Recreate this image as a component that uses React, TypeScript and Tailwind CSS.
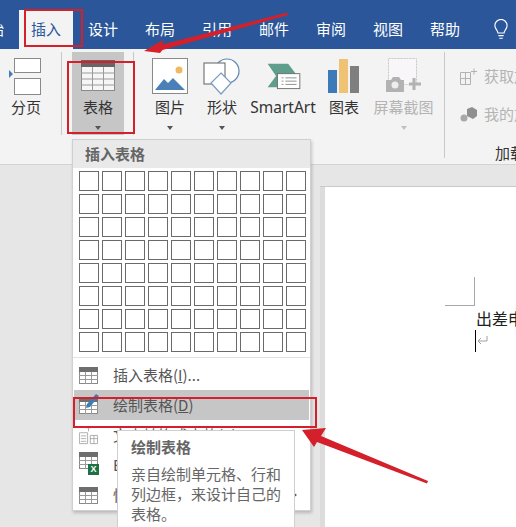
const font = { fontFamily: '"Noto Sans CJK SC", "Noto Sans", sans-serif' };

const tabs = ['设计', '布局', '引用', '邮件', '审阅', '视图', '帮助'];

function TableIcon({ className = '' }: { className?: string }) {
  return (
    <svg width="19" height="17" viewBox="0 0 19 17" className={className}>
      <rect x="0.5" y="0.5" width="18" height="16" fill="#fff" stroke="#8a8a8a" />
      <rect x="0" y="0" width="19" height="5" fill="#6e6e6e" />
      <path d="M0 8.500h19M0 12.500h19M6.500 5v12M12.500 5v12" stroke="#9a9a9a" />
    </svg>
  );
}

function BigTableIcon() {
  return (
    <svg width="34" height="31" viewBox="0 0 34 31" className="mb-[4px]">
      <rect x="0.5" y="0.5" width="33" height="30" fill="#f6f6f6" stroke="#8a8a8a" />
      <rect x="0" y="0" width="34" height="7" fill="#6b6464" />
      <path d="M0 13h34M0 19h34M0 25h34M11.500 7v24M22.500 7v24" stroke="#9a9a9a" />
    </svg>
  );
}

function RibbonItem({ width, label, icon, arrow = true, faded = false, active = false }: any) {
  return (
    <div className={`flex flex-col items-center shrink-0 h-[83px] ${active ? 'bg-[#c6c6c6]' : ''}`} style={{ width }}>
      <div className="h-[43px] flex items-end justify-center">{icon}</div>
      <div className={`mt-[1px] text-[15px] leading-[22px] whitespace-nowrap ${faded ? 'text-[#b4b4b4]' : 'text-[#333]'}`}>{label}</div>
      {arrow && <div className={`mt-[8px] w-0 h-0 border-x-[3.5px] border-x-transparent border-t-[4px] ${faded ? 'border-t-[#c0c0c0]' : 'border-t-[#555]'}`} />}
    </div>
  );
}

function MenuItem({ icon, label, active = false, more = false }: any) {
  return (
    <div className={`flex items-center h-[30px] mx-[1px] pl-[5px] ${active ? 'bg-[#c6c6c6]' : ''}`}>
      <div className="w-[34px] shrink-0 flex justify-start">{icon}</div>
      <div className="text-[15px] text-[#555] whitespace-nowrap">{label}</div>
      {more && <div className="ml-auto mr-[12px] w-0 h-0 border-y-[3.5px] border-y-transparent border-l-[4px] border-l-[#555]" />}
    </div>
  );
}

export default function App() {
  return (
    <div className="relative w-[516px] h-[527px] overflow-hidden bg-[#e6e6e6]" style={font}>
      {/* tabs */}
      <div className="h-[49px] bg-[#2b579a] flex items-end text-white text-[15px]">
        <div className="w-[19px] h-[39px] overflow-hidden relative shrink-0">
          <span className="absolute right-[15px] top-[8px] whitespace-nowrap">开始</span>
        </div>
        <div className="w-[54px] h-[39px] bg-[#f3f3f3] text-[#2b579a] flex items-center justify-center shrink-0 pb-[1px]">插入</div>
        <div className="flex gap-[27px] ml-[15px] h-[39px] items-center pb-[1px]">
          {tabs.map((t) => (
            <span key={t} className="whitespace-nowrap">{t}</span>
          ))}
        </div>
        <svg width="16" height="21" viewBox="0 0 18 24" className="ml-[33px] mb-[9px] shrink-0" fill="none" stroke="#fff" strokeWidth="1.3">
          <path d="M5.500 16c0-3-3.500-4.500-3.500-8.500a7 7 0 0 1 14 0c0 4-3.500 5.500-3.500 8.500z" />
          <path d="M6 19h6M7 22h4" />
        </svg>
      </div>

      {/* ribbon */}
      <div className="h-[116px] bg-[#f3f3f3] border-b border-[#d4d4d4] flex pt-[3px]">
        <div className="w-[62px] h-[83px] border-r border-[#c8c8c8] shrink-0">
          <RibbonItem
            width={52}
            label="分页"
            arrow={false}
            icon={
              <svg width="34" height="38" viewBox="0 0 34 38">
                <rect x="5.500" y="1.500" width="26" height="14" fill="#fff" stroke="#8a8a8a" />
                <rect x="5.500" y="21.500" width="26" height="16" fill="#fff" stroke="#8a8a8a" />
                <path d="M0 13l4 4-4 4z" fill="#4a7ab5" />
              </svg>
            }
          />
        </div>
        <div className="ml-[10px]">
          <RibbonItem width={52} active label="表格" icon={<BigTableIcon />} />
        </div>
        <div className="ml-[9px] w-px h-[83px] bg-[#c8c8c8] shrink-0" />
        <RibbonItem
          width={72}
          label="图片"
          icon={
            <svg width="36" height="36" viewBox="0 0 36 36" className="mb-[1px]">
              <rect x="0.500" y="0.500" width="35" height="35" fill="#fff" stroke="#8a8a8a" />
              <circle cx="27" cy="12" r="3.500" fill="#f0b860" />
              <path d="M3 32l9-11 4 4 5-5 12 12z" fill="#4a7fb8" />
            </svg>
          }
        />
        <RibbonItem
          width={32}
          label="形状"
          icon={
            <svg width="38" height="37" viewBox="0 0 38 37" fill="none" stroke="#5f87b3" strokeWidth="1.2">
              <circle cx="24" cy="13" r="12" fill="#fff" />
              <rect x="1" y="5" width="21" height="21" fill="#fff" stroke="#7a7a7a" />
              <path d="M18 15l10 10-10 11L8 25z" fill="#fff" stroke="#7a9cc0" />
            </svg>
          }
        />
        <RibbonItem
          width={90}
          arrow={false}
          label={<span className="text-[15.500px]" style={{ fontFamily: '"Noto Sans", sans-serif' }}>SmartArt</span>}
          icon={
            <svg width="37" height="28" viewBox="0 0 38 30" className="mb-[5px]">
              <path d="M2 2h22l10 13-8 12H2l9-12z" fill="#5f9d8c" />
              <rect x="12.500" y="12.500" width="24" height="16" fill="#fff" stroke="#6f6f6f" />
              <path d="M17 17h2M21 17h12M17 20.500h2M21 20.500h12M17 24h2M21 24h12" stroke="#8a8a8a" />
            </svg>
          }
        />
        <RibbonItem
          width={32}
          arrow={false}
          label="图表"
          icon={
            <svg width="32" height="34" viewBox="0 0 32 34" className="mb-[2px]">
              <rect x="0" y="11" width="9" height="23" fill="#3f7ab8" />
              <rect x="11" y="0" width="9" height="34" fill="#efc274" />
              <rect x="22" y="7" width="9" height="27" fill="#7f7f7f" />
            </svg>
          }
        />
        <RibbonItem
          width={87}
          faded
          label="屏幕截图"
          icon={
            <svg width="36" height="34" viewBox="0 0 36 34" className="mb-[3px]">
              <rect x="2.500" y="0.500" width="28" height="26" fill="#f8f6f8" stroke="#c8c8c8" strokeDasharray="2 1" />
              <path d="M0 22h5l2-3h6l2 3h3v12H0z" fill="#b2b2b2" />
              <circle cx="9" cy="27" r="3.500" fill="#eee" />
              <path d="M28 20v12M23 26h12" stroke="#b2b2b2" strokeWidth="3" />
            </svg>
          }
        />
        <div className="ml-[-3px] w-px h-[106px] bg-[#c8c8c8] shrink-0" />
        <div className="ml-[15px] flex flex-col text-[15px] text-[#b4b4b4] whitespace-nowrap">
          <div className="flex items-center h-[22px] mt-[13px] gap-[7px]">
            <svg width="17" height="17" viewBox="0 0 17 17" fill="none" stroke="#b2b2b2" className="shrink-0">
              <path d="M.5 4.500h10v12H.5zM.5 10.500h10M5.500 4.500v12M11 3.500h6M14 .5v6" />
            </svg>
            <span>获取加载项</span>
          </div>
          <div className="flex items-center h-[22px] mt-[16px] gap-[7px]">
            <svg width="17" height="17" viewBox="0 0 17 17" className="shrink-0">
              <path d="M7 3l5-2 5 3v6l-4 3-6-3z" fill="#8f8f8f" />
              <circle cx="4" cy="12" r="3.500" fill="#a8a8a8" />
            </svg>
            <span>我的加载项</span>
          </div>
          <div className="text-[#333] mt-[17px] ml-[35px] leading-[22px]">加载项</div>
        </div>
      </div>

      {/* document */}
      <div className="flex pl-[320px] pt-[21px] h-[362px]">
        <div className="w-[5px] h-full bg-[#dcdcdc] border-t border-[#c9c9c9]" />
        <div className="flex-1 bg-white border-t border-[#c9c9c9] pl-[120px] pt-[90px] overflow-hidden">
          <div className="w-[30px] h-[29px] border-r border-b border-[#a8a8a8]" />
          <div className="ml-[31px] text-[16px] leading-[24px] text-[#222] whitespace-nowrap">出差申请表</div>
          <div className="ml-[30px] relative w-[20px] h-[22px] border-l border-black">
            <svg width="11" height="9" viewBox="0 0 11 9" className="absolute left-[1px] top-[6px]" fill="none" stroke="#a0a0a0">
              <path d="M10 0v5H1M4 2L1 5l3 3" />
            </svg>
          </div>
        </div>
      </div>

      {/* table dropdown */}
      <div className="absolute left-[72px] top-[139px] w-[239px] h-[372px] bg-white border border-[#d0d0d0] shadow-[1px_2px_3px_rgba(0,0,0,0.2)]">
        <div className="h-[28px] bg-[#e9e9e9] flex items-center pl-[12px] text-[15px] font-bold text-[#666]">插入表格</div>
        <div className="grid grid-cols-[repeat(10,20px)] gap-[3px] pl-[6px] pt-[3px]">
          {Array.from({ length: 80 }).map((_, i) => (
            <div key={i} className="h-[20px] border border-[#6a6a6a] bg-white" />
          ))}
        </div>
        <div className="h-px bg-[#e2e2e2] mt-[5px] mb-[2px]" />
        <MenuItem icon={<TableIcon />} label={<>插入表格(<span className="underline">I</span>)...</>} />
        <MenuItem
          active
          label={<>绘制表格(<span className="underline">D</span>)</>}
          icon={
            <span className="relative block w-[19px] h-[20px]">
              <TableIcon className="absolute top-[2px] left-0" />
              <svg width="14" height="16" viewBox="0 0 14 16" className="absolute left-[6px] -top-[2px]">
                <path d="M11 1l3 2-9 11-4 1 1-4z" fill="#3f7ab8" />
              </svg>
            </span>
          }
        />
        <MenuItem
          label={<>文本转换成表格(<span className="underline">V</span>)...</>}
          icon={
            <svg width="19" height="22" viewBox="0 0 21 22" fill="none" stroke="#a8a8a8">
              <path d="M.5 8.500h9v12h-9zM2 12h6M2 15h6M2 18h6M12.500 11.500h8v9h-8zM12 15h9M16.500 11v10M8 3h5M10.500 1v6" />
            </svg>
          }
        />
        <MenuItem
          label={<>Excel 电子表格(<span className="underline">X</span>)</>}
          icon={
            <span className="relative block w-[19px] h-[20px]">
              <TableIcon className="absolute top-[-3px] left-0" />
              <span className="absolute -right-[1px] bottom-0 w-[11px] h-[11px] bg-[#1e7145] text-white text-[9px] leading-[11px] font-bold text-center" style={{ fontFamily: '"Liberation Sans", sans-serif' }}>X</span>
            </span>
          }
        />
        <MenuItem icon={<TableIcon />} label={<>快速表格(<span className="underline">T</span>)</>} more />
      </div>

      {/* tooltip */}
      <div className="absolute left-[117px] top-[430px] w-[178px] h-[110px] bg-white border border-[#cfcfcf] pl-[13px] pr-[10px] pt-[6px] text-[15px] text-[#666] leading-[20px]">
        <div className="font-bold mb-[7px]">绘制表格</div>
        <div>亲自绘制单元格、行和列边框，来设计自己的表格。</div>
      </div>

      {/* red annotations */}
      <div className="absolute left-[24px] top-[9px] w-[59px] h-[38px] border-2 border-[#d3202a]" />
      <div className="absolute left-[67px] top-[61px] w-[68px] h-[73px] border-2 border-[#d3202a]" />
      <div className="absolute left-[73px] top-[397px] w-[244px] h-[31px] border-2 border-[#d3202a]" />
      <svg width="516" height="527" viewBox="0 0 516 527" className="absolute left-0 top-0 pointer-events-none">
        <path d="M144 51L163 40L162.500 44.500L287 12.500L288 15L162.500 50L160 53z" fill="#d3202a" />
        <path d="M302 430L326 428L321 436L428 481L427 483.500L317 442L314 447z" fill="#d3202a" />
      </svg>
    </div>
  );
}
